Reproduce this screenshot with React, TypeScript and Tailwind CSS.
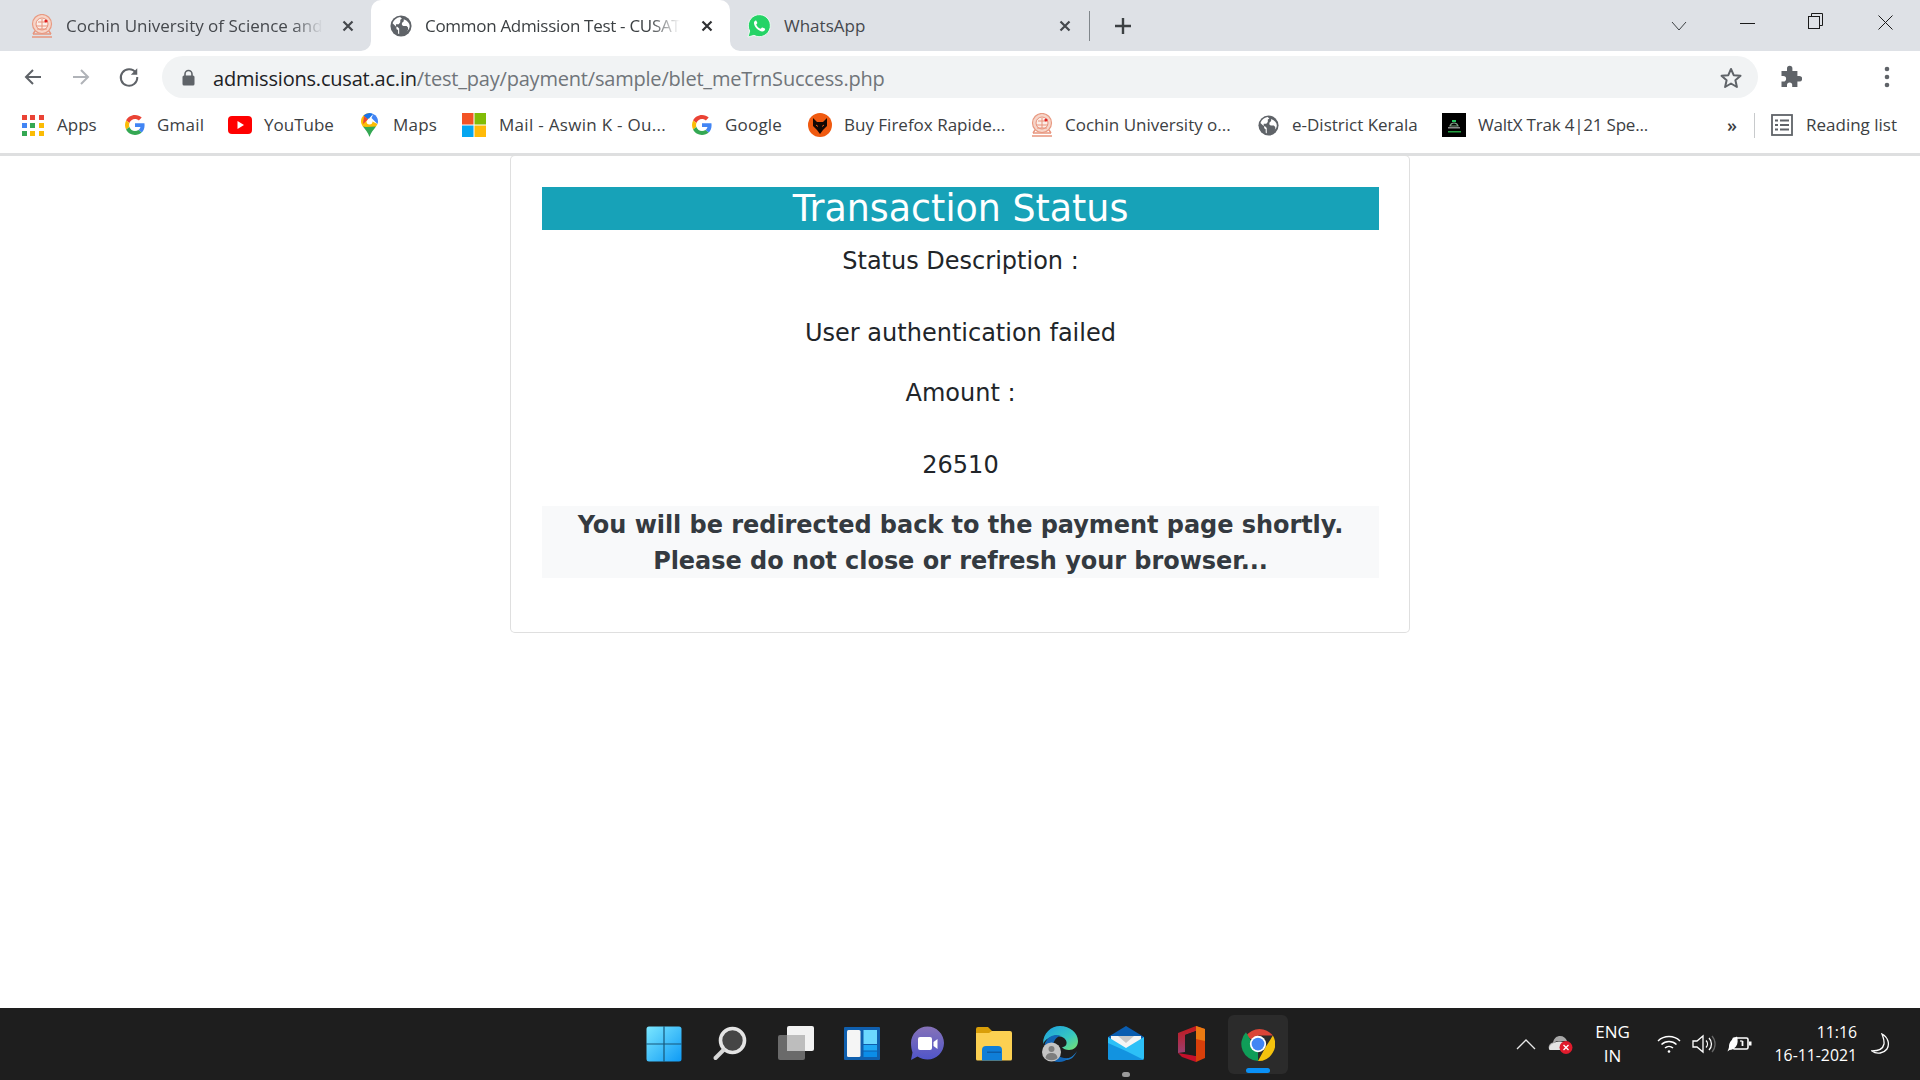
import React from "react";

const ui = "font-['Open_Sans','Noto_Sans',sans-serif]";

function Cusat({ size = 24 }: { size?: number }) {
  return (
    <svg width={size} height={size} viewBox="0 0 24 24" className="shrink-0">
      <circle cx="12" cy="10" r="9.5" fill="#f6d5c9" stroke="#e89a82" strokeWidth="1.2" />
      <circle cx="12" cy="10" r="6" fill="#fbeee8" stroke="#e8927a" strokeWidth="1" />
      <path d="M6 12h12M7 15h10M8 8h8M12 5v10" stroke="#e8927a" strokeWidth="1" />
      <path d="M3 20h18M2 23h20" stroke="#e8957e" strokeWidth="1.6" />
      <path d="M5 17l-2 3M19 17l2 3" stroke="#e8957e" strokeWidth="1.4" />
      <circle cx="16" cy="7" r="1.6" fill="#e02020" />
    </svg>
  );
}

function Globe({ size = 22 }: { size?: number }) {
  return (
    <svg width={size} height={size} viewBox="0 0 24 24" className="shrink-0">
      <circle cx="12" cy="12" r="11.5" fill="#5f6368" />
      <path d="M11 2.2C7 3 4 5.5 2.8 9l4.2 4.2v1.2c0 1 .8 1.8 1.8 1.8v3.4c0 .7.6 1 1.2 1.2v-6l-2-2H6.5V10h3l1.7-2V5.2L13 4 11 2.2zM15 4.5v2.3l-2 2v2l1.5 1.2h3.6l1.6 1.6v2.6l-1.7 2c2-1.4 3.5-3.8 3.5-6.2 0-3-2.3-6-6.5-7.5z" fill="#fff" />
    </svg>
  );
}

function GoogleG({ size = 20 }: { size?: number }) {
  return (
    <svg width={size} height={size} viewBox="0 0 48 48" className="shrink-0">
      <path fill="#EA4335" d="M24 9.5c3.5 0 6.700 1.200 9.200 3.600l6.900-6.900C35.900 2.400 30.500 0 24 0 14.600 0 6.500 5.400 2.600 13.200l8 6.200C12.500 13.600 17.800 9.500 24 9.500z" />
      <path fill="#4285F4" d="M47 24.500c0-1.600-.2-3.100-.4-4.500H24v9h13c-.6 3-2.300 5.500-4.800 7.200l7.700 6C44.400 38 47 31.800 47 24.500z" />
      <path fill="#FBBC05" d="M10.500 28.600C10 27.200 9.800 25.600 9.800 24s.3-3.200.8-4.600l-8-6.200C1 16.400 0 20.100 0 24s1 7.600 2.600 10.800l7.900-6.200z" />
      <path fill="#34A853" d="M24 48c6.500 0 11.900-2.100 15.900-5.800l-7.700-6c-2.100 1.400-4.900 2.300-8.200 2.300-6.200 0-11.500-4.200-13.400-9.800l-8 6.200C6.500 42.600 14.600 48 24 48z" />
    </svg>
  );
}

function AppsGrid() {
  const colors = ["#ea4335", "#ea4335", "#ea4335", "#4285f4", "#34a853", "#fbbc05", "#34a853", "#fbbc05", "#fbbc05"];
  return (
    <div className="grid grid-cols-3 gap-[3px] w-[22px] shrink-0">
      {colors.map((c, i) => (
        <svg key={i} width="5" height="5" viewBox="0 0 5 5">
          <rect width="5" height="5" fill={c} />
        </svg>
      ))}
    </div>
  );
}

function YouTubeIcon() {
  return (
    <svg width="24" height="18" viewBox="0 0 24 18" className="shrink-0">
      <rect width="24" height="18" rx="4" fill="#f00" />
      <path d="M9.500 5l6.500 4-6.500 4z" fill="#fff" />
    </svg>
  );
}

function MapsIcon() {
  return (
    <svg width="17" height="24" viewBox="0 0 17 24" className="shrink-0">
      <path d="M8.500 0C3.800 0 0 3.700 0 8.300c0 2 .8 3.600 1.800 5.100L8.500 8.300z" fill="#fbbc04" />
      <path d="M2.500 2.500A8.400 8.400 0 0 1 8.500 0c1.300 0 2.600.3 3.700.9L7 6.500z" fill="#1a73e8" />
      <path d="M12.200.9A8.300 8.300 0 0 1 17 8.300c0 1-.2 1.800-.5 2.700L10.500 5z" fill="#4285f4" />
      <path d="M1.800 13.400c2.500 3.300 5.400 5.800 6.700 10.600 1.300-4.800 4.100-7.200 6.500-10.600l-4-4z" fill="#34a853" />
      <path d="M1.800 13.400l6.700-6.400 8 4c-.4 1-1 1.600-1.500 2.400L5 14z" fill="#fbbc04" />
      <circle cx="8.500" cy="8.500" r="3" fill="#fff" />
      <path d="M3 3l4 3.500L2 11z" fill="#ea4335" />
    </svg>
  );
}

function MsIcon() {
  return (
    <svg width="24" height="24" viewBox="0 0 24 24" className="shrink-0">
      <rect x="0" y="0" width="11.500" height="11.500" fill="#f35325" />
      <rect x="12.500" y="0" width="11.500" height="11.500" fill="#81bc06" />
      <rect x="0" y="12.500" width="11.500" height="11.500" fill="#05a6f0" />
      <rect x="12.500" y="12.500" width="11.500" height="11.500" fill="#ffba08" />
    </svg>
  );
}

function FoxIcon() {
  return (
    <svg width="24" height="24" viewBox="0 0 24 24" className="shrink-0">
      <circle cx="12" cy="12" r="12" fill="#f05a10" />
      <path d="M5 5l4 4h6l4-4v8l-4 4-3 4-3-4-4-4z" fill="#120804" />
      <path d="M8 12l2 1.500M16 12l-2 1.500" stroke="#f05a10" strokeWidth="1" />
    </svg>
  );
}

function WaltxIcon() {
  return (
    <svg width="24" height="24" viewBox="0 0 24 24" className="shrink-0">
      <rect width="24" height="24" fill="#000" />
      <path d="M8 13c1-4 7-4 8 0z" fill="none" stroke="#7a9a80" strokeWidth="1.200" />
      <rect x="10" y="7" width="4" height="2" fill="#22c55e" />
      <rect x="6" y="14" width="12" height="1.500" fill="#8a8a8a" />
      <rect x="6" y="18" width="13" height="1.500" fill="#22a040" />
    </svg>
  );
}

function ReadingIcon() {
  return (
    <svg width="22" height="22" viewBox="0 0 22 22" fill="none" stroke="#5f6368" strokeWidth="1.800" className="shrink-0">
      <rect x="1" y="1" width="20" height="20" />
      <path d="M4 6.500h3M9 6.500h9M4 11h3M9 11h9M4 15.500h3M9 15.500h9" />
    </svg>
  );
}

function WhatsappIcon() {
  return (
    <svg width="24" height="24" viewBox="0 0 24 24" className="shrink-0">
      <path d="M1 23l1.700-6A11 11 0 1 1 7 21.300z" fill="#25d366" stroke="#fff" strokeWidth="0.800" />
      <path d="M8.500 6.500c-1 .6-1.700 1.700-1.500 3 .4 3.400 4.500 7.700 8.200 8 1.400.1 2.500-.8 2.900-2 .1-.4 0-.7-.3-.9l-2.300-1.100c-.3-.1-.6 0-.8.200l-.9 1.100c-2.200-.7-3.800-2.300-4.600-4.400l.9-.9c.2-.2.300-.5.200-.8L9.300 6.700c-.1-.3-.5-.4-.8-.2z" fill="#fff" />
    </svg>
  );
}

function Close({ color = "#45484d" }: { color?: string }) {
  return (
    <svg width="12" height="12" viewBox="0 0 12 12" className="shrink-0">
      <path d="M1.500 1.500l9 9M10.500 1.500l-9 9" stroke={color} strokeWidth="2.200" />
    </svg>
  );
}

function Flare({ side }: { side: "left" | "right" }) {
  return (
    <svg
      width="10"
      height="10"
      viewBox="0 0 10 10"
      className={side === "left" ? "absolute bottom-0 -left-[10px]" : "absolute bottom-0 -right-[10px]"}
    >
      <path d={side === "left" ? "M10 0v10H0a10 10 0 0 0 10-10z" : "M0 0v10h10A10 10 0 0 1 0 0z"} fill="#fff" />
    </svg>
  );
}

function TabBar() {
  return (
    <div className={`${ui} h-[51px] bg-[#dee1e6] flex items-stretch text-[17px] text-[#45484d]`}>
      <div className="w-[371px] flex items-center pl-[30px] pr-[17px]">
        <Cusat />
        <span className="ml-[12px] whitespace-nowrap [mask-image:linear-gradient(to_right,black_88%,transparent)]">
          Cochin University of Science and
        </span>
        <span className="ml-auto"><Close /></span>
      </div>
      <div className="relative w-[359px] bg-white rounded-t-[10px] flex items-center pl-[19px] pr-[17px] text-[#3c4043]">
        <Flare side="left" />
        <Globe />
        <span className="ml-[13px] whitespace-nowrap tracking-[-0.3px] [mask-image:linear-gradient(to_right,black_88%,transparent)]">
          Common Admission Test - CUSAT
        </span>
        <span className="ml-auto"><Close color="#303134" /></span>
        <Flare side="right" />
      </div>
      <div className="w-[350px] flex items-center pl-[17px] pr-[9px]">
        <WhatsappIcon />
        <span className="ml-[13px]">WhatsApp</span>
        <span className="ml-auto"><Close /></span>
      </div>
      <div className="w-px h-[30px] bg-[#80868b] self-center ml-[9px]" />
      <svg width="20" height="20" viewBox="0 0 20 20" className="self-center ml-[23px]">
        <path d="M10 2v16M2 10h16" stroke="#3c4043" strokeWidth="2.400" />
      </svg>
      <div className="flex-1" />
      <svg width="16" height="10" viewBox="0 0 16 10" className="self-center">
        <path d="M1 1l7 8 7-8" fill="none" stroke="#3c4043" strokeWidth="1" />
      </svg>
      <svg width="15" height="2" viewBox="0 0 15 2" className="self-center ml-[53px] mt-[-3px]">
        <rect width="15" height="1" fill="#1a1a1a" />
      </svg>
      <svg width="15" height="16" viewBox="0 0 15 16" fill="none" stroke="#1a1a1a" className="self-center ml-[53px] mt-[-9px]">
        <rect x="0.500" y="3.500" width="11" height="12" />
        <path d="M3.500 3.500v-3h11v12h-3" />
      </svg>
      <svg width="15" height="15" viewBox="0 0 15 15" className="self-center ml-[55px] mr-[27px] mt-[-7px]">
        <path d="M0.500 0.500l14 14M14.500 0.500l-14 14" stroke="#1a1a1a" strokeWidth="1" />
      </svg>
    </div>
  );
}

function Toolbar() {
  return (
    <div className={`${ui} h-[52px] bg-white flex items-center`}>
      <svg width="20" height="20" viewBox="0 0 20 20" className="ml-[23px] shrink-0">
        <path d="M18 10H3M10 3l-7 7 7 7" fill="none" stroke="#5f6368" strokeWidth="2" />
      </svg>
      <svg width="20" height="20" viewBox="0 0 20 20" className="ml-[28px] shrink-0">
        <path d="M2 10h15M10 3l7 7-7 7" fill="none" stroke="#b0b3b8" strokeWidth="2" />
      </svg>
      <svg width="22" height="22" viewBox="0 0 24 24" className="ml-[27px] shrink-0">
        <path d="M19.500 7.500A9 9 0 1 0 21 12" fill="none" stroke="#5f6368" strokeWidth="2.200" />
        <path d="M21 2.500v7h-7z" fill="#5f6368" />
      </svg>
      <div className="ml-[22px] w-[1596px] h-[42px] rounded-full bg-[#f1f3f4] flex items-center pl-[20px] pr-[15px] shrink-0">
        <svg width="13" height="17" viewBox="0 0 13 17" className="shrink-0 mt-[1px]">
          <path d="M3 7V5a3.500 3.500 0 0 1 7 0v2" fill="none" stroke="#5f6368" strokeWidth="1.600" />
          <rect x="0.500" y="6.500" width="12" height="10" rx="1.500" fill="#5f6368" />
        </svg>
        <span className="ml-[18px] mt-[3px] text-[20px] tracking-[-0.2px] text-[#70757a] whitespace-nowrap">
          <span className="text-[#202124]">admissions.cusat.ac.in</span>/test_pay/payment/sample/blet_meTrnSuccess.php
        </span>
        <svg width="24" height="24" viewBox="0 0 24 24" className="ml-auto shrink-0 mt-[2px]">
          <path d="M12 3l2.700 6.200 6.800.6-5.100 4.500 1.500 6.700L12 17.500 6.100 21l1.500-6.700L2.500 9.800l6.800-.6z" fill="none" stroke="#5f6368" strokeWidth="2" strokeLinejoin="round" />
        </svg>
      </div>
      <svg width="24" height="24" viewBox="0 0 24 24" className="ml-[20px] shrink-0">
        <path d="M9 3.500a2.700 2.700 0 0 1 5.400 0V6h5v5h2a2.800 2.800 0 0 1 0 5.600h-2V22h-5.200v-2a2.600 2.600 0 0 0-5.200 0v2H3.500v-5.400h1.800a2.800 2.800 0 0 0 0-5.600H3.500V6H9z" fill="#5f6368" />
      </svg>
      <svg width="6" height="22" viewBox="0 0 6 22" className="ml-[82px] shrink-0">
        <circle cx="3" cy="3" r="2.300" fill="#5f6368" />
        <circle cx="3" cy="11" r="2.300" fill="#5f6368" />
        <circle cx="3" cy="19" r="2.300" fill="#5f6368" />
      </svg>
    </div>
  );
}

function Bookmarks() {
  const label = "whitespace-nowrap";
  return (
    <div className={`${ui} h-[53px] bg-white border-b-[3px] border-[#dedfe0] flex items-center text-[#3c4043] text-[17px] pb-[6px]`}>
      <div className="ml-[22px] flex items-center w-[103px] shrink-0 gap-[13px]">
        <AppsGrid />
        <span className={label}>Apps</span>
      </div>
      <div className="flex items-center w-[103px] shrink-0 gap-[12px]">
        <GoogleG />
        <span className={`${label} tracking-[0.2px]`}>Gmail</span>
      </div>
      <div className="flex items-center w-[133px] shrink-0 gap-[12px]">
        <YouTubeIcon />
        <span className={label}>YouTube</span>
      </div>
      <div className="flex items-center w-[101px] shrink-0 gap-[15px]">
        <MapsIcon />
        <span className={`${label} tracking-[0.2px]`}>Maps</span>
      </div>
      <div className="flex items-center w-[231px] shrink-0 gap-[13px]">
        <MsIcon />
        <span className={`${label} tracking-[0.3px]`}>Mail - Aswin K - Ou...</span>
      </div>
      <div className="flex items-center w-[116px] shrink-0 gap-[13px] -ml-px">
        <GoogleG />
        <span className={`${label} tracking-[0.2px]`}>Google</span>
      </div>
      <div className="flex items-center w-[222px] shrink-0 gap-[12px]">
        <FoxIcon />
        <span className={label}>Buy Firefox Rapide...</span>
      </div>
      <div className="flex items-center w-[228px] shrink-0 gap-[11px]">
        <Cusat />
        <span className={label}>Cochin University o...</span>
      </div>
      <div className="flex items-center w-[184px] shrink-0 gap-[13px]">
        <Globe size={21} />
        <span className={label}>e-District Kerala</span>
      </div>
      <div className="flex items-center w-[285px] shrink-0 gap-[12px]">
        <WaltxIcon />
        <span className={`${label} tracking-[-0.2px]`}>WaltX Trak 4|21 Spe...</span>
      </div>
      <span className="text-[18px] w-[27px] shrink-0 font-semibold">»</span>
      <div className="w-px h-[25px] bg-[#c8cacc] shrink-0" />
      <div className="ml-[16px] flex items-center shrink-0 gap-[13px]">
        <ReadingIcon />
        <span className={label}>Reading list</span>
      </div>
    </div>
  );
}

function Card() {
  const row = "text-center text-[24px] leading-[36px] text-[#212529]";
  return (
    <div className="-mt-px w-[900px] h-[478px] shrink-0 bg-white border border-[rgba(0,0,0,0.125)] rounded-[5px] pl-[31px] pr-[30px] pt-[31px] font-['DejaVu_Sans',sans-serif]">
      <div className="h-[43px] bg-[#17a2b8] text-white text-[36.4px] leading-[43px] text-center">Transaction Status</div>
      <div className={`${row} mt-[13px]`}>Status Description :</div>
      <div className="h-[36px]" />
      <div className={row}>User authentication failed</div>
      <div className={`${row} mt-[24px]`}>Amount :</div>
      <div className="h-[36px]" />
      <div className={row}>26510</div>
      <div className="mt-[23px] h-[72px] pt-[1px] bg-[#f8f9fa] text-center text-[24px] leading-[36px] font-bold text-[#343a40] tracking-[-0.05px]">
        You will be redirected back to the payment page shortly.
        <br />
        Please do not close or refresh your browser...
      </div>
    </div>
  );
}

function StartIcon() {
  return (
    <svg width="36" height="36" viewBox="0 0 36 36">
      <defs>
        <linearGradient id="st" x1="0" y1="0" x2="1" y2="1">
          <stop offset="0" stopColor="#7be7ff" />
          <stop offset="1" stopColor="#0e9af5" />
        </linearGradient>
      </defs>
      <rect x="0.500" y="0.500" width="35" height="35" rx="2.500" fill="url(#st)" />
      <path d="M18 0v36M0 18h36" stroke="#17577a" strokeWidth="1.200" />
    </svg>
  );
}

function SearchIcon() {
  return (
    <svg width="36" height="36" viewBox="0 0 36 36">
      <circle cx="20.500" cy="14.500" r="12" fill="#454545" stroke="#e4e4e4" strokeWidth="3.600" />
      <path d="M11.500 24L3.500 32" stroke="#d8d8d8" strokeWidth="4" strokeLinecap="round" />
    </svg>
  );
}

function TaskViewIcon() {
  return (
    <svg width="36" height="36" viewBox="0 0 36 36">
      <rect x="9" y="0" width="27" height="25" rx="2" fill="#f2f2f2" />
      <rect x="0" y="9" width="27" height="25" rx="2" fill="#6a6a6a" />
      <rect x="9" y="9" width="18" height="16" fill="#bdbdbd" />
    </svg>
  );
}

function WidgetsIcon() {
  return (
    <svg width="36" height="34" viewBox="0 0 36 34">
      <rect width="36" height="33" rx="1" fill="#0f5fae" />
      <rect x="3" y="3" width="13.500" height="27" rx="1.500" fill="#f5f5f5" />
      <rect x="19.500" y="3" width="13.500" height="14" fill="#6bd8ff" />
      <rect x="19.500" y="18" width="13.500" height="5.500" fill="#1fa8f5" />
      <rect x="19.500" y="24.500" width="13.500" height="5.500" fill="#0b8de8" />
    </svg>
  );
}

function ChatIcon() {
  return (
    <svg width="36" height="36" viewBox="0 0 36 36">
      <defs>
        <linearGradient id="ch" x1="0" y1="0" x2="0" y2="1">
          <stop offset="0" stopColor="#8672b8" />
          <stop offset="1" stopColor="#4f55c9" />
        </linearGradient>
      </defs>
      <path d="M17.500 0.500c9 0 16.500 7.500 16.500 16.500s-7.500 16.500-16.500 16.500c-3.500 0-7-1-10-3L1 34l1.500-7.500C1.500 23.700 1 20.500 1 17 1 8 8.500.5 17.500.5z" fill="url(#ch)" />
      <rect x="8" y="11" width="14" height="13" rx="2" fill="#fff" />
      <path d="M23.500 16l4-3v10l-4-3z" fill="#fff" />
    </svg>
  );
}

function ExplorerIcon() {
  return (
    <svg width="36" height="36" viewBox="0 0 36 36">
      <path d="M0 3a2 2 0 0 1 2-2h10l4 4h8v8H0z" fill="#d99e08" />
      <path d="M0 7h13l3-2h18a2 2 0 0 1 2 2v26a1.500 1.500 0 0 1-1.500 1.500h-33A1.500 1.500 0 0 1 0 33z" fill="#fcd052" />
      <path d="M6 34.500V24a4 4 0 0 1 4-4h12a4 4 0 0 1 4 4v10.500z" fill="#0f7ed8" />
      <rect x="11" y="25.500" width="14" height="1.500" fill="#0c5da8" />
    </svg>
  );
}

function EdgeIcon() {
  return (
    <svg width="36" height="36" viewBox="0 0 36 36">
      <defs>
        <linearGradient id="ed" x1="0" y1="0" x2="1" y2="1">
          <stop offset="0" stopColor="#1b9de2" />
          <stop offset="0.6" stopColor="#37c9c0" />
          <stop offset="1" stopColor="#7be36b" />
        </linearGradient>
      </defs>
      <path d="M1 18C1 7 9 0 18 0c10 0 18 7 18 15 0 6-4.500 9-9 9-3 0-6-1-7-3 3 0 5-2 4.500-5C24 12 19 10 15 10c-6 0-12 3-14 8z" fill="url(#ed)" />
      <path d="M3 17c4-8 11-9 16-7-6 1-9 7-7 13 1.500 6 7 10 15 9-3 2.500-6 4-10 4C8 36 1 29 3 17z" fill="#1265b5" />
      <path d="M22 33c5 0 10-3 13-8-2 5-6 9-10 9z" fill="#1d7bc9" />
      <circle cx="9.500" cy="26" r="9.500" fill="#c4c4c4" />
      <circle cx="9.500" cy="23" r="3" fill="#7e7e7e" />
      <path d="M3.500 32c.5-4 3-5 6-5s5.500 1 6 5c-3 3-9 3-12 0z" fill="#7e7e7e" />
    </svg>
  );
}

function MailIcon() {
  return (
    <svg width="36" height="36" viewBox="0 0 36 36">
      <path d="M0 11L18 0l18 11v4H0z" fill="#0a5db0" />
      <path d="M3 10h30v8L18 25 3 18z" fill="#f5f5f5" />
      <path d="M10 10h16l-8 7z" fill="#c8c8c8" />
      <path d="M0 11l18 11 18-11v21a2 2 0 0 1-2 2H2a2 2 0 0 1-2-2z" fill="#2cc0f7" />
      <path d="M0 32V17l18 8 18 9H2a2 2 0 0 1-2-2z" fill="#1293e0" />
    </svg>
  );
}

function OfficeIcon() {
  return (
    <svg width="28" height="36" viewBox="0 0 28 36">
      <defs>
        <linearGradient id="of" x1="0" y1="0" x2="0" y2="1">
          <stop offset="0" stopColor="#c3181a" />
          <stop offset="1" stopColor="#9a3f70" />
        </linearGradient>
      </defs>
      <path d="M0 7L18 0v5L7 9v17L0 27z" fill="url(#of)" />
      <path d="M18 0l9 3v29l-9 4z" fill="#d83f0a" />
      <path d="M18 0l9 3v12l-9-2z" fill="#ea7a12" />
      <path d="M0 27l18 3v6L4 31z" fill="#c5102a" />
      <path d="M7 9l11-4v25L7 26z" fill="#1e1e1e" />
    </svg>
  );
}

function ChromeIcon() {
  return (
    <svg width="34" height="34" viewBox="0 0 48 48">
      <path d="M24 24L7 12.500A24 24 0 0 1 45 12H24z" fill="#db4437" />
      <path d="M24 48A24 24 0 0 1 7 7.500L24 36z" fill="#0f9d58" />
      <path d="M45 12a24 24 0 0 1-21 36l11-20z" fill="#f4c20d" />
      <circle cx="24" cy="24" r="11.500" fill="#fff" />
      <circle cx="24" cy="24" r="9" fill="#4285f4" />
    </svg>
  );
}

function Slot({ children }: { children: React.ReactNode }) {
  return <div className="w-[66px] h-[59px] flex items-center justify-center shrink-0">{children}</div>;
}

function Taskbar() {
  return (
    <div className={`${ui} h-[72px] shrink-0 bg-[#1e1e1e] flex items-center text-white`}>
      <div className="flex-1" />
      <div className="flex items-center ml-[2px]">
        <Slot><StartIcon /></Slot>
        <Slot><SearchIcon /></Slot>
        <Slot><TaskViewIcon /></Slot>
        <Slot><WidgetsIcon /></Slot>
        <Slot><ChatIcon /></Slot>
        <Slot><ExplorerIcon /></Slot>
        <Slot><EdgeIcon /></Slot>
        <div className="relative">
          <Slot><MailIcon /></Slot>
          <div className="absolute bottom-[-3px] left-[29px] w-[8px] h-[5px] rounded-full bg-[#9a9a9a]" />
        </div>
        <Slot><OfficeIcon /></Slot>
        <div className="relative w-[60px] h-[59px] ml-[3px] mr-[3px] rounded-[6px] bg-[#2b2b2b] flex items-center justify-center">
          <ChromeIcon />
          <div className="absolute bottom-[1px] left-[18px] w-[24px] h-[5px] rounded-full bg-[#0a90f5]" />
        </div>
      </div>
      <div className="flex-1 flex items-center justify-end">
        <svg width="20" height="12" viewBox="0 0 20 12" className="shrink-0">
          <path d="M1 11l9-9 9 9" fill="none" stroke="#e8e8e8" strokeWidth="1.300" />
        </svg>
        <svg width="25" height="20" viewBox="0 0 25 20" className="ml-[12px] shrink-0">
          <path d="M1 15c-1-3 1-6 4-6.500C6 4 9 2 12 2c3.500 0 6 2 7 5H9c-3 1-4 4-4 8z" fill="#a8a8a8" />
          <path d="M1 15.500c0-3 1.500-5.500 5-6.500 4-2 10-2 13 1l1 6H2z" fill="#e4e4e4" />
          <circle cx="18" cy="13.500" r="6.500" fill="#e01b2c" />
          <path d="M15.500 11l5 5M20.500 11l-5 5" stroke="#fff" strokeWidth="1.300" />
        </svg>
        <div className="ml-[20px] w-[40px] text-center leading-[24px] text-[17px] shrink-0">
          <div>ENG</div>
          <div>IN</div>
        </div>
        <svg width="24" height="20" viewBox="0 0 24 20" fill="none" stroke="#fff" strokeWidth="1.500" className="ml-[24px] shrink-0">
          <path d="M1 7a16 16 0 0 1 22 0M4.500 10.500a11 11 0 0 1 15 0M8 14a6 6 0 0 1 8 0" />
          <circle cx="12" cy="17.500" r="1.300" fill="#fff" stroke="none" />
        </svg>
        <svg width="24" height="20" viewBox="0 0 24 20" fill="none" stroke="#fff" strokeWidth="1.300" className="ml-[11px] shrink-0">
          <path d="M1 7h4l6-5v16l-6-5H1z" />
          <path d="M14 6.500a5 5 0 0 1 0 7M17 4a8.500 8.500 0 0 1 0 12" />
          <path d="M20 2a12 12 0 0 1 0 16" stroke="#666" />
        </svg>
        <svg width="25" height="18" viewBox="0 0 25 18" className="ml-[11px] shrink-0">
          <rect x="6" y="3" width="15" height="11" rx="1.500" fill="none" stroke="#fff" strokeWidth="1.600" />
          <rect x="22" y="6.500" width="2.500" height="4" fill="#fff" />
          <path d="M0.500 16.500c.5-2 1.500-3 1.500-5C2 7 5 4 10 1.500c1 3.500 1 7-1 10-1.500 2-4 3.300-6.500 3.500z" fill="#fff" />
          <path d="M15.500 6v5" stroke="#fff" strokeWidth="1.800" />
          <path d="M13 6h2.500" stroke="#fff" strokeWidth="1.200" />
        </svg>
        <div className="ml-[23px] text-right leading-[23px] text-[15.8px] shrink-0">
          <div>11:16</div>
          <div>16-11-2021</div>
        </div>
        <svg width="20" height="22" viewBox="0 0 20 22" fill="none" stroke="#fff" strokeWidth="1.300" className="ml-[14px] mr-[29px] shrink-0">
          <path d="M11 1c6 3 8 10 5 15-3 4-10 6-15 2 6 0 11-2 12-7 .5-4-1-7-2-10z" />
        </svg>
      </div>
    </div>
  );
}

export default function App() {
  return (
    <div className="w-[1920px] h-[1080px] flex flex-col overflow-hidden bg-white">
      <TabBar />
      <Toolbar />
      <Bookmarks />
      <main className="flex-1 flex justify-center items-start bg-white">
        <Card />
      </main>
      <Taskbar />
    </div>
  );
}
